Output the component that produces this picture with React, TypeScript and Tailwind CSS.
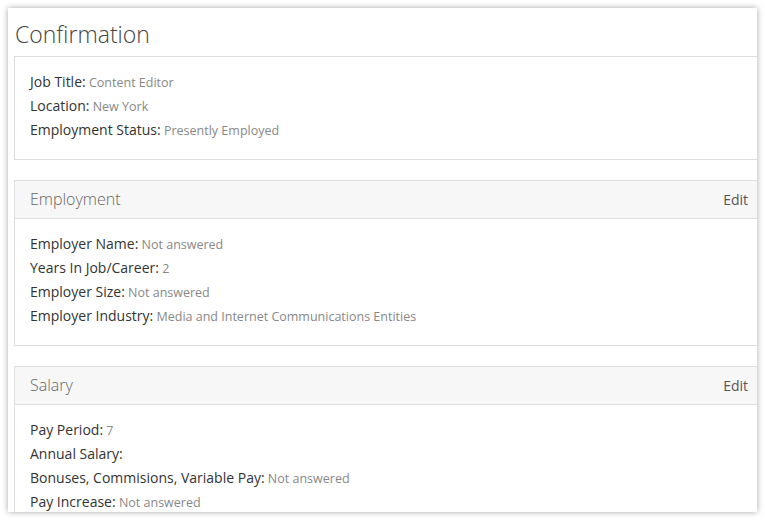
import React from "react";

type Row = { label: string; value?: string };

function Rows({ rows }: { rows: Row[] }) {
  return (
    <div className="pt-[12px] pb-[18px] pl-[15px]">
      {rows.map((r) => (
        <div key={r.label} className="h-[24px] leading-[24px] whitespace-nowrap">
          <span className="text-[14px] text-[#333]">{r.label}:</span>
          {r.value ? <span className="text-[12.5px] text-[#888]"> {r.value}</span> : null}
        </div>
      ))}
    </div>
  );
}

function Panel({ title, rows }: { title?: string; rows: Row[] }) {
  return (
    <div className="border border-[#dedede] mr-[-20px] mb-[20px] bg-white">
      {title ? (
        <div className="h-[38px] bg-[#f7f7f7] border-b border-[#dedede] flex items-center justify-between pl-[15px] pr-[28px] pb-[1px]">
          <span className="text-[16px] font-light text-[#666]">{title}</span>
          <span className="text-[14px] text-[#555]">Edit</span>
        </div>
      ) : null}
      <Rows rows={rows} />
    </div>
  );
}

export default function App() {
  return (
    <div
      className="w-[765px] h-[520px] bg-white p-[8px] pb-[8px]"
      style={{ fontFamily: '"Open Sans", "Noto Sans", sans-serif' }}
    >
      <div className="w-[749px] h-[504px] overflow-hidden bg-white shadow-[0_0_6px_rgba(0,0,0,0.35)] pl-[6px]">
        <div className="h-[48px] pl-[1px] pt-[10px] text-[23px] font-light text-[#444] leading-[32px]">
          Confirmation
        </div>
        <Panel
          rows={[
            { label: "Job Title", value: "Content Editor" },
            { label: "Location", value: "New York" },
            { label: "Employment Status", value: "Presently Employed" },
          ]}
        />
        <Panel
          title="Employment"
          rows={[
            { label: "Employer Name", value: "Not answered" },
            { label: "Years In Job/Career", value: "2" },
            { label: "Employer Size", value: "Not answered" },
            { label: "Employer Industry", value: "Media and Internet Communications Entities" },
          ]}
        />
        <Panel
          title="Salary"
          rows={[
            { label: "Pay Period", value: "7" },
            { label: "Annual Salary" },
            { label: "Bonuses, Commisions, Variable Pay", value: "Not answered" },
            { label: "Pay Increase", value: "Not answered" },
          ]}
        />
      </div>
    </div>
  );
}
